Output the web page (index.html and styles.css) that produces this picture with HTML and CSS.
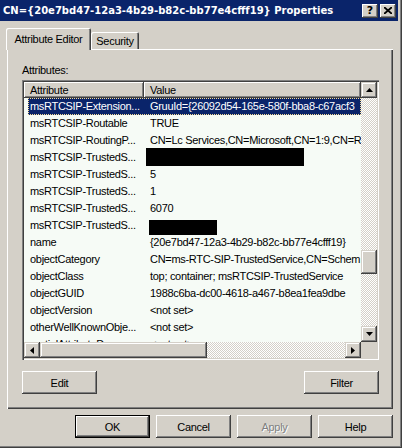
FILE: index.html
```html
<!DOCTYPE html>
<html lang="en">
<head>
  <meta charset="UTF-8" />
  <title>Properties</title>
  <link rel="stylesheet" href="styles.css">
</head>
<body>
  <div class="window">
    <div class="titlebar">
      <span class="title">CN={20e7bd47-12a3-4b29-b82c-bb77e4cfff19} Properties</span>
      <div class="caption-buttons">
        <span class="caption-btn help">?</span>
        <span class="caption-btn">
          <svg width="8" height="7" viewBox="0 0 8 7"><path d="M0 0 L8 7 M8 0 L0 7" stroke="#000" stroke-width="1.8"/></svg>
        </span>
      </div>
    </div>

    <div class="tabs">
      <div class="tab active">Attribute Editor</div>
      <div class="tab">Security</div>
    </div>

    <div class="panel">
      <div class="label">Attributes:</div>

      <div class="listview">
        <div class="lv-content">
          <div class="lv-header">
            <div class="hcell c1">Attribute</div>
            <div class="hcell c2">Value</div>
          </div>
          <div class="row selected"><div class="cell-name">msRTCSIP-Extension...</div><div class="cell-value">GruuId={26092d54-165e-580f-bba8-c67acf3</div></div>
          <div class="row"><div class="cell-name">msRTCSIP-Routable</div><div class="cell-value">TRUE</div></div>
          <div class="row"><div class="cell-name">msRTCSIP-RoutingP...</div><div class="cell-value">CN=Lc Services,CN=Microsoft,CN=1:9,CN=R</div></div>
          <div class="row"><div class="cell-name">msRTCSIP-TrustedS...</div><div class="cell-value"><span class="redact long"></span></div></div>
          <div class="row"><div class="cell-name">msRTCSIP-TrustedS...</div><div class="cell-value">5</div></div>
          <div class="row"><div class="cell-name">msRTCSIP-TrustedS...</div><div class="cell-value">1</div></div>
          <div class="row"><div class="cell-name">msRTCSIP-TrustedS...</div><div class="cell-value">6070</div></div>
          <div class="row"><div class="cell-name">msRTCSIP-TrustedS...</div><div class="cell-value"><span class="redact short"></span></div></div>
          <div class="row"><div class="cell-name">name</div><div class="cell-value">{20e7bd47-12a3-4b29-b82c-bb77e4cfff19}</div></div>
          <div class="row"><div class="cell-name">objectCategory</div><div class="cell-value">CN=ms-RTC-SIP-TrustedService,CN=Schem</div></div>
          <div class="row"><div class="cell-name">objectClass</div><div class="cell-value">top; container; msRTCSIP-TrustedService</div></div>
          <div class="row"><div class="cell-name">objectGUID</div><div class="cell-value">1988c6ba-dc00-4618-a467-b8ea1fea9dbe</div></div>
          <div class="row"><div class="cell-name">objectVersion</div><div class="cell-value">&lt;not set&gt;</div></div>
          <div class="row"><div class="cell-name">otherWellKnownObje...</div><div class="cell-value">&lt;not set&gt;</div></div>
          <div class="row"><div class="cell-name">partialAttributeD...</div><div class="cell-value">&lt;not set&gt;</div></div>
        </div>

        <div class="vscroll">
          <div class="sb-btn"><svg width="7" height="4" viewBox="0 0 7 4"><path d="M3.5 0 L7 4 H0 Z"/></svg></div>
          <div class="sb-track vtrack"><div class="thumb vthumb"></div></div>
          <div class="sb-btn"><svg width="7" height="4" viewBox="0 0 7 4"><path d="M0 0 H7 L3.5 4 Z"/></svg></div>
        </div>

        <div class="hscroll">
          <div class="sb-btn"><svg width="4" height="7" viewBox="0 0 4 7"><path d="M4 0 V7 L0 3.5 Z"/></svg></div>
          <div class="sb-track htrack"><div class="thumb hthumb"></div></div>
          <div class="sb-btn"><svg width="4" height="7" viewBox="0 0 4 7"><path d="M0 0 L4 3.5 L0 7 Z"/></svg></div>
        </div>

        <div class="corner"></div>
      </div>

      <div class="panel-buttons">
        <button class="btn">Edit</button>
        <button class="btn">Filter</button>
      </div>
    </div>

    <div class="dialog-buttons">
      <button class="btn default">OK</button>
      <button class="btn">Cancel</button>
      <button class="btn disabled">Apply</button>
      <button class="btn">Help</button>
    </div>
  </div>
</body>
</html>
```

FILE: styles.css
```css
* {
  margin: 0;
  padding: 0;
  box-sizing: border-box;
}

body {
  font-family: "Liberation Sans", Arial, sans-serif;
  font-size: 11px;
  letter-spacing: -0.3px;
  color: #000;
  background: #d4d0c8;
}

.window {
  width: 402px;
  height: 448px;
  background: #d4d0c8;
  box-shadow: inset -1px -1px #404040, inset -2px -2px #808080;
  display: flex;
  flex-direction: column;
}

/* Title bar */
.titlebar {
  height: 21px;
  margin-right: 4px;
  padding: 0 2px 0 3px;
  background: #0a246a;
  color: #fff;
  display: flex;
  align-items: center;
  justify-content: space-between;
}

.title {
  font-family: "DejaVu Sans", sans-serif;
  font-size: 10px;
  font-weight: bold;
  letter-spacing: 0;
  white-space: nowrap;
}

.caption-buttons {
  display: flex;
  gap: 2px;
}

.caption-btn {
  width: 16px;
  height: 14px;
  background: #d4d0c8;
  color: #000;
  box-shadow: inset -1px -1px #404040, inset 1px 1px #fff, inset -2px -2px #808080;
  display: flex;
  align-items: center;
  justify-content: center;
}

.caption-btn.help {
  font-family: "DejaVu Sans", sans-serif;
  font-size: 11px;
  font-weight: bold;
  letter-spacing: 0;
  padding-bottom: 1px;
}

/* Tabs */
.tabs {
  height: 21px;
  margin-top: 7px;
  padding-left: 6px;
  display: flex;
  align-items: flex-end;
}

.tab {
  height: 17px;
  width: 48px;
  display: flex;
  align-items: center;
  justify-content: center;
  box-shadow: inset 1px 1px #fff, inset -1px 0 #404040, inset -2px 0 #808080;
  border-radius: 2px 2px 0 0;
  background: #d4d0c8;
}

.tab.active {
  height: 22px;
  width: 85px;
  margin-bottom: -1px;
  padding-bottom: 1px;
  position: relative;
  z-index: 1;
}

/* Panel */
.panel {
  margin-left: 7px;
  width: 386px;
  height: 360px;
  padding: 15px 0 0 15px;
  box-shadow: inset 1px 1px #fff, inset -1px -1px #404040, inset -2px -2px #808080;
}

.label {
  line-height: 13px;
  margin-bottom: 3px;
}

/* List view */
.listview {
  width: 357px;
  height: 280px;
  padding: 2px;
  background: #f6fbf6;
  box-shadow: inset 1px 1px #808080, inset 2px 2px #404040, inset -1px -1px #fff, inset -2px -2px #d4d0c8;
  display: grid;
  grid-template-columns: 1fr 16px;
  grid-template-rows: 1fr 16px;
}

.lv-content {
  overflow: hidden;
  white-space: nowrap;
}

.lv-header {
  display: flex;
  height: 16px;
}

.hcell {
  line-height: 16px;
  padding-left: 6px;
  background: #d4d0c8;
  box-shadow: inset -1px -1px #404040, inset 1px 1px #fff, inset -2px -2px #808080;
}

.hcell.c1 {
  width: 120px;
}

.hcell.c2 {
  flex: 1;
}

.row {
  display: flex;
  height: 17px;
  line-height: 17px;
  margin-left: 4px;
}

.row.selected {
  background: #0a246a;
  color: #fff;
  outline: 1px dotted #f5db95;
  outline-offset: -1px;
}

.cell-name {
  width: 116px;
  flex-shrink: 0;
  padding-left: 2px;
}

.cell-value {
  padding-left: 6px;
}

.redact {
  display: block;
  background: #000;
}

.redact.long {
  width: 158px;
  height: 18px;
  margin: -1px 0 0 -4px;
}

.redact.short {
  width: 68px;
  height: 15px;
  margin: 3px 0 0 -1px;
}

/* Scroll bars */
.vscroll {
  display: flex;
  flex-direction: column;
}

.hscroll {
  display: flex;
}

.sb-btn {
  width: 16px;
  height: 16px;
  flex-shrink: 0;
  background: #d4d0c8;
  box-shadow: inset -1px -1px #404040, inset 1px 1px #d4d0c8, inset -2px -2px #808080, inset 2px 2px #fff;
  display: flex;
  align-items: center;
  justify-content: center;
}

.sb-track {
  flex: 1;
  background: repeating-conic-gradient(#fff 0 25%, #d4d0c8 0 50%) 0 0 / 2px 2px;
}

.vtrack {
  padding-top: 152px;
}

.thumb {
  background: #d4d0c8;
  box-shadow: inset -1px -1px #404040, inset 1px 1px #d4d0c8, inset -2px -2px #808080, inset 2px 2px #fff;
}

.vthumb {
  height: 24px;
}

.hthumb {
  width: 167px;
  height: 16px;
}

.corner {
  background: #d4d0c8;
}

/* Buttons */
.panel-buttons {
  width: 357px;
  margin-top: 11px;
  display: flex;
  justify-content: space-between;
}

.dialog-buttons {
  margin-top: 6px;
  padding-right: 9px;
  display: flex;
  justify-content: flex-end;
  gap: 6px;
}

.btn {
  width: 75px;
  height: 23px;
  border: none;
  font: inherit;
  letter-spacing: inherit;
  color: #000;
  background: #d4d0c8;
  box-shadow: inset -1px -1px #404040, inset 1px 1px #fff, inset -2px -2px #808080;
  display: flex;
  align-items: center;
  justify-content: center;
}

.btn.default {
  box-shadow: inset 0 0 0 1px #000, inset -2px -2px #404040, inset 2px 2px #fff, inset -3px -3px #808080;
}

.btn.disabled {
  color: #808080;
  text-shadow: 1px 1px #fff;
}
```
